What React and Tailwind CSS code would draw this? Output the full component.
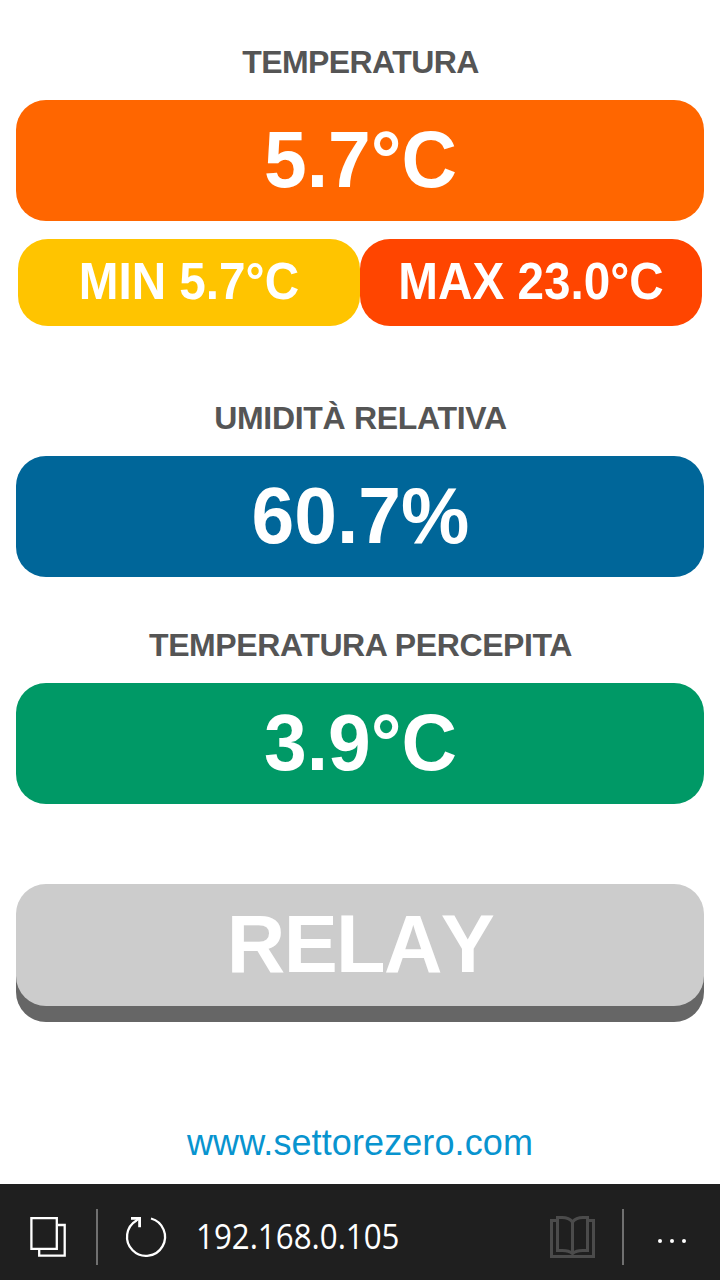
const font = "font-['Liberation_Sans',Arial,sans-serif]";

function Label({ tracking, children }) {
  return <h2 className={`pl-px text-[32px] leading-9 font-bold text-[#555] ${tracking}`}>{children}</h2>;
}

function Value({ color, children }) {
  return (
    <div className={`flex h-[121px] w-full items-center justify-center rounded-[30px] pb-px text-[80px] font-bold text-white ${color}`}>
      <span className="scale-x-[0.96]">{children}</span>
    </div>
  );
}

function Extreme({ color, children }) {
  return (
    <div className={`flex flex-1 items-center justify-center rounded-[30px] ${color}`}>
      <span className="scale-x-[0.935] whitespace-nowrap">{children}</span>
    </div>
  );
}

export default function App() {
  return (
    <div className={`flex h-[1280px] w-[720px] flex-col overflow-hidden bg-white ${font}`}>
      <main className="flex h-[1184px] flex-col items-center px-4 pt-[44px]">
        <Label tracking="tracking-[-0.6px]">TEMPERATURA</Label>
        <div className="mt-5 w-full"><Value color="bg-[#ff6600]">5.7°C</Value></div>
        <div className="mt-[18px] flex h-[87px] w-[684px] text-[51px] font-bold text-white">
          <Extreme color="bg-[#ffc400]">MIN 5.7°C</Extreme>
          <Extreme color="bg-[#ff4500]">MAX 23.0°C</Extreme>
        </div>
        <div className="mt-[74px]"><Label tracking="tracking-[-0.3px]">UMIDITÀ RELATIVA</Label></div>
        <div className="mt-5 w-full"><Value color="bg-[#006699]">60.7%</Value></div>
        <div className="mt-[50px]"><Label tracking="tracking-[-0.4px]">TEMPERATURA PERCEPITA</Label></div>
        <div className="mt-5 w-full"><Value color="bg-[#009966]">3.9°C</Value></div>
        <button className="mt-20 flex h-[122px] w-full items-center justify-center rounded-[30px] bg-[#ccc] pb-px text-[81px] font-bold tracking-[-1.6px] text-white shadow-[0_16px_0_#666] [font-kerning:none]">
          RELAY
        </button>
        <a className="mt-[116px] text-[36px] leading-[42px] tracking-[0.1px] text-[#0894cf]">www.settorezero.com</a>
      </main>
      <footer className="flex h-24 items-center bg-[#1f1f1f] text-white">
        <svg className="h-24 w-24" viewBox="0 0 96 96" fill="none" stroke="currentColor" strokeWidth="2.3">
          <path d="M31.4 34.2h25.4v30.6H31.4zM58 41h6.7v30.7H39.2V66" />
        </svg>
        <div className="mt-[10px] h-14 w-0.5 bg-[#707070]" />
        <svg className="h-24 w-[98px]" viewBox="98 0 98 96" fill="none" stroke="currentColor" strokeWidth="2.3">
          <path d="M151 34.5A19 19 0 1 1 136.5 36.4L139 34.5" />
          <path d="M131 34.4h8.6v8.8" strokeWidth="2.8" />
        </svg>
        <span className="mt-2 w-[354px] origin-left scale-x-[0.92] font-['Open_Sans',sans-serif] text-[34px]">192.168.0.105</span>
        <svg className="h-24 w-[72px]" viewBox="550 0 72 96" fill="none" stroke="#4b4b4b" strokeWidth="3">
          <path d="M556 36.5h-4.5v36h42v-36H589" />
          <path d="M572.5 38Q569 33.5 562 33.5h-4.5v33h5Q569 66.5 572.5 69.5Q576 66.5 582.5 66.5h5v-33H583Q576 33.5 572.5 38zV69.5" />
        </svg>
        <div className="mt-[10px] h-14 w-0.5 bg-[#707070]" />
        <svg className="h-24 w-24" viewBox="624 0 96 96" fill="currentColor">
          <circle cx="660" cy="57" r="2" />
          <circle cx="672" cy="57" r="2" />
          <circle cx="684" cy="57" r="2" />
        </svg>
      </footer>
    </div>
  );
}
